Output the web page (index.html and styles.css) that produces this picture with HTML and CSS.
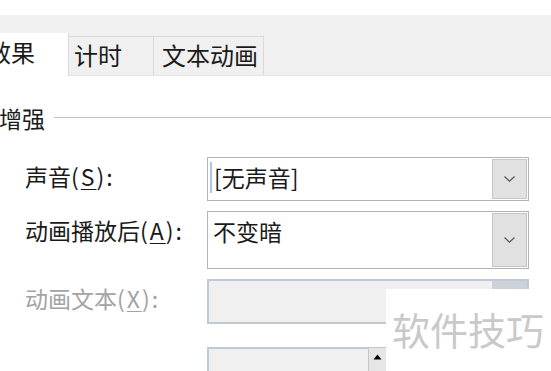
FILE: index.html
```html
<!DOCTYPE html>
<html lang="zh">
<head>
<meta charset="utf-8">
<link rel="stylesheet" href="styles.css">
</head>
<body>
<div class="page">
  <div class="topgap"></div>
  <div class="tabstrip">
    <div class="tab active"><span class="tab-clip">效果</span></div>
    <div class="tab t2">计时</div>
    <div class="tab t3">文本动画</div>
  </div>
  <div class="panel">
    <div class="group-title"><span class="gt-text">增强</span><span class="gt-line"></span></div>
    <div class="form">
      <div class="label">声音<span class="key">(<u>S</u>):</span></div>
      <div class="combo h1">
        <div class="value"><span class="caret"></span>[无声音]</div>
        <div class="drop"><svg width="13" height="8" viewBox="0 0 13 8"><path d="M1.5 1.5 L6.5 6.2 L11.5 1.5" fill="none" stroke="#555" stroke-width="1.2"/></svg></div>
      </div>
      <div class="label">动画播放后<span class="key">(<u>A</u>):</span></div>
      <div class="combo h2">
        <div class="value">不变暗</div>
        <div class="drop"><svg width="13" height="8" viewBox="0 0 13 8"><path d="M1.5 1.5 L6.5 6.2 L11.5 1.5" fill="none" stroke="#555" stroke-width="1.2"/></svg></div>
      </div>
      <div class="label disabled">动画文本<span class="key">(<u>X</u>):</span></div>
      <div class="combo h3 dis">
        <div class="value"></div>
        <div class="drop"></div>
      </div>
      <div class="label"></div>
      <div class="spin">
        <div class="spin-field"></div>
        <div class="spin-btn"><svg width="9" height="6" viewBox="0 0 9 6"><path d="M0.5 5.5 L4.5 0.5 L8.5 5.5 Z" fill="#000"/></svg></div>
      </div>
    </div>
  </div>
  <div class="watermark">软件技巧</div>
</div>
</body>
</html>
```

FILE: styles.css
```css
html, body {
  margin: 0;
  padding: 0;
  background: #fff;
}
.page {
  position: relative;
  width: 551px;
  height: 371px;
  overflow: hidden;
  font-family: "Noto Sans CJK SC", "Noto Sans", sans-serif;
  color: #1a1a1a;
}
.topgap {
  height: 15px;
  background: #fff;
}
.tabstrip {
  height: 61px;
  background: #f0f0f0;
  display: flex;
  align-items: flex-end;
  border-bottom: 1px solid #e6e6e6;
  box-sizing: border-box;
}
.tab {
  box-sizing: border-box;
  height: 39px;
  font-size: 24px;
  line-height: 36px;
  background: #f0f0f0;
  border-top: 1px solid #d9d9d9;
  border-right: 1px solid #d9d9d9;
  white-space: nowrap;
}
.tab.active {
  height: 43px;
  width: 69px;
  margin-bottom: -1px;
  background: #fff;
  line-height: 38px;
  overflow: hidden;
  border-top: none;
  display: flex;
}
.tab-clip {
  margin-left: -13px;
}
.tab.t2 {
  width: 85px;
  padding-left: 5px;
}
.tab.t3 {
  width: 110px;
  padding-left: 8px;
}
.panel {
  padding-top: 28px;
}
.group-title {
  display: flex;
  align-items: center;
  height: 28px;
}
.gt-text {
  font-size: 23px;
  line-height: 28px;
  margin-left: -1px;
}
.gt-line {
  flex: 1;
  height: 1px;
  background: #c4c4c4;
  margin-left: 9px;
  margin-top: -2px;
}
.form {
  margin-top: 25px;
  display: grid;
  grid-template-columns: 207px 322px;
  row-gap: 10px;
}
.label {
  padding-left: 25px;
  padding-top: 3px;
  font-size: 23px;
  line-height: 32px;
  white-space: nowrap;
}
.key {
  letter-spacing: 2px;
}
.label u {
  text-underline-offset: 3px;
  text-decoration-thickness: 1px;
}
.label.disabled {
  color: #a3a3a3;
}
.combo {
  box-sizing: border-box;
  display: flex;
  border: 1px solid #b4b4b4;
  background: #fff;
}
.combo.h1 { height: 44px; }
.combo.h2 { height: 58px; }
.combo.h3 { height: 45px; }
.value {
  flex: 1;
  font-size: 23px;
  line-height: 32px;
  padding: 3px 0 0 5px;
  white-space: nowrap;
  display: flex;
  align-items: flex-start;
}
.caret {
  display: inline-block;
  width: 2px;
  height: 31px;
  background: #a9c8ee;
  margin: 1px 2px 0 -3px;
}
.drop {
  box-sizing: border-box;
  width: 35px;
  margin: 1px 1px 1px 0;
  background: #e1e1e1;
  border: 1px solid #c6c6c6;
  display: flex;
  align-items: center;
  justify-content: center;
}
.combo.dis {
  background: #f0f0f0;
  border: 2px solid #c0cad6;
}
.combo.dis .drop {
  margin: 0;
  border: none;
  background: #cdd2d8;
}
.spin {
  margin-top: 13px;
  height: 40px;
  display: flex;
}
.spin-field {
  box-sizing: border-box;
  width: 161px;
  background: #f0f0f0;
  border: 2px solid #c0cad6;
  border-right: none;
}
.spin-btn {
  box-sizing: border-box;
  width: 19px;
  background: #e6e6e6;
  border: 1px solid #c6c6c6;
  display: flex;
  justify-content: center;
  align-items: flex-start;
  padding-top: 6px;
}
.watermark {
  position: absolute;
  left: 386px;
  top: 289px;
  width: 165px;
  height: 82px;
  background: #fff;
  color: #c9c9c9;
  font-size: 38px;
  line-height: 80px;
  padding-left: 6px;
  box-sizing: border-box;
  white-space: nowrap;
}
```
